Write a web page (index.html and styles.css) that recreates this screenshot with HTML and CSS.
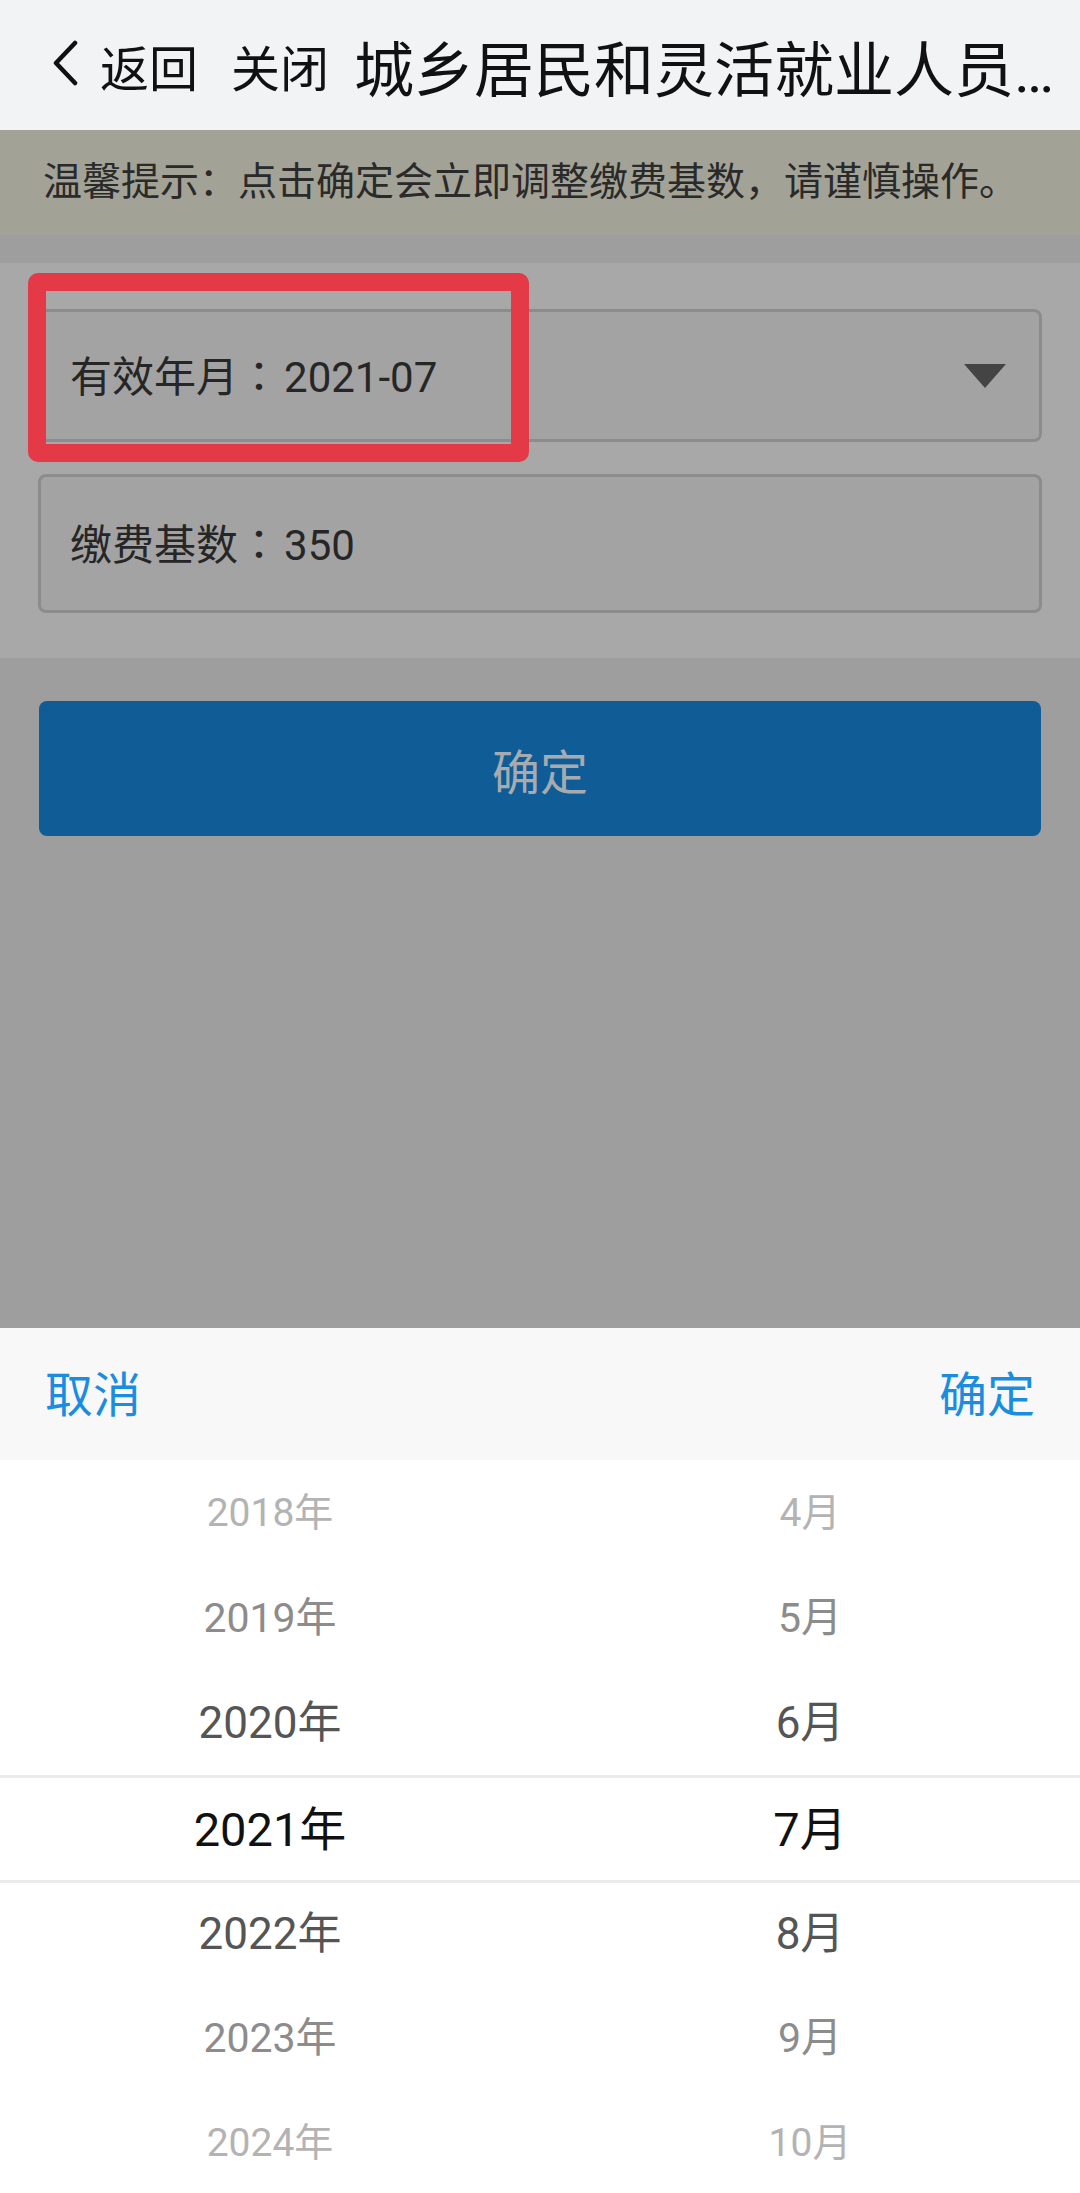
FILE: index.html
```
<!DOCTYPE html>
<html lang="zh-CN">
<head>
    <meta charset="UTF-8">
    <meta name="viewport" content="width=device-width, initial-scale=1.0">
    <title>缴费基数调整</title>
    <link rel="stylesheet" href="styles.css">
</head>
<body>

<div class="topbar">
    <a class="back">
        <svg class="chevron" width="28" height="46" viewBox="0 0 28 46">
            <polyline points="24,3 5,23 24,43" fill="none" stroke="#111" stroke-width="4.5" stroke-linecap="round" stroke-linejoin="round"/>
        </svg>
        <span>返回</span>
    </a>
    <a class="close">关闭</a>
    <div class="title">城乡居民和灵活就业人员…</div>
</div>

<div class="notice">温馨提示：点击确定会立即调整缴费基数，请谨慎操作。</div>

<div class="band"></div>

<div class="panel">
    <div class="field select">
        <span>有效年月<i class="colon" lang="zh-TW">：</i>2021-07</span>
        <svg class="caret" width="42" height="24" viewBox="0 0 42 24">
            <polygon points="0,0 42,0 21,24" fill="#444"/>
        </svg>
    </div>
    <div class="field input">
        <span>缴费基数<i class="colon" lang="zh-TW">：</i>350</span>
    </div>
    <div class="mark"></div>
</div>

<div class="actions">
    <button class="submit">确定</button>
</div>

<div class="sheet">
    <div class="toolbar">
        <span>取消</span>
        <span>确定</span>
    </div>
    <div class="wheels">
        <div class="wheel">
            <div class="item far">2018年</div>
            <div class="item near">2019年</div>
            <div class="item next">2020年</div>
            <div class="item current">2021年</div>
            <div class="item next">2022年</div>
            <div class="item near">2023年</div>
            <div class="item far">2024年</div>
        </div>
        <div class="wheel">
            <div class="item far">4月</div>
            <div class="item near">5月</div>
            <div class="item next">6月</div>
            <div class="item current">7月</div>
            <div class="item next">8月</div>
            <div class="item near">9月</div>
            <div class="item far">10月</div>
        </div>
    </div>
</div>

</body>
</html>
```

FILE: styles.css
```
body {
    margin: 0;
    height: 2193px;
    overflow: hidden;
    display: flex;
    flex-direction: column;
    background: #9e9e9e;
    font-family: Roboto, "Noto Sans CJK SC", sans-serif;
}
.topbar {
    height: 130px;
    flex-shrink: 0;
    display: flex;
    align-items: center;
    background: #f2f3f5;
    color: #111;
    padding-right: 16px;
}
.back {
    display: flex;
    align-items: center;
    margin-left: 51px;
    font-size: 49px;
}
.chevron {
    margin-right: 21px;
    margin-top: -4px;
}
.close {
    margin-left: 33px;
    font-size: 49px;
}
.title {
    flex: 1;
    min-width: 0;
    margin-left: 25px;
    font-size: 60px;
    white-space: nowrap;
    overflow: hidden;
}
.notice {
    height: 105px;
    flex-shrink: 0;
    line-height: 105px;
    padding-left: 43px;
    background: #a3a296;
    color: #2a2a2a;
    font-size: 39px;
}
.band {
    height: 28px;
    flex-shrink: 0;
}
.panel {
    position: relative;
    flex-shrink: 0;
    background: #a8a8a8;
    padding: 46px 38px 45px;
    display: flex;
    flex-direction: column;
    gap: 32px;
}
.field {
    display: flex;
    align-items: center;
    justify-content: space-between;
    box-sizing: border-box;
    border: 3px solid #8c8c8c;
    border-radius: 8px;
    background: #a3a3a3;
    padding: 0 33px 4px 29px;
    font-size: 42px;
    color: #262626;
}
.field .caret {
    margin-top: 4px;
}
.colon {
    font-style: normal;
    font-family: "Noto Sans CJK TC", sans-serif;
    margin-right: 4px;
}
.select {
    height: 133px;
}
.input {
    height: 139px;
}
.mark {
    position: absolute;
    left: 28px;
    top: 10px;
    width: 501px;
    height: 189px;
    box-sizing: border-box;
    border: 18px solid #e43946;
    border-radius: 10px;
}
.actions {
    flex: 1;
    padding: 43px 39px 0;
}
.submit {
    width: 100%;
    height: 135px;
    border: none;
    border-radius: 8px;
    background: #0f5c97;
    color: #a6abb0;
    font-family: inherit;
    font-size: 48px;
}
.sheet {
    flex-shrink: 0;
    height: 865px;
    display: flex;
    flex-direction: column;
    background: #fff;
}
.toolbar {
    height: 132px;
    flex-shrink: 0;
    box-sizing: border-box;
    display: flex;
    align-items: center;
    justify-content: space-between;
    padding: 0 45px 6px;
    background: #f8f8f8;
    color: #1b8de0;
    font-size: 48px;
}
.wheels {
    flex: 1;
    display: flex;
    overflow: hidden;
}
.wheel {
    flex: 1;
    display: flex;
    flex-direction: column;
}
.item {
    height: 105px;
    flex-shrink: 0;
    box-sizing: border-box;
    padding-bottom: 8px;
    display: flex;
    align-items: center;
    justify-content: center;
}
.far {
    font-size: 39px;
    color: #b3b3b3;
}
.near {
    font-size: 41px;
    color: #8c8c8c;
}
.next {
    font-size: 44px;
    color: #555;
}
.current {
    font-size: 47px;
    color: #111;
    border-top: 3px solid #ebebeb;
}
.current + .item {
    border-top: 3px solid #ebebeb;
}
```
